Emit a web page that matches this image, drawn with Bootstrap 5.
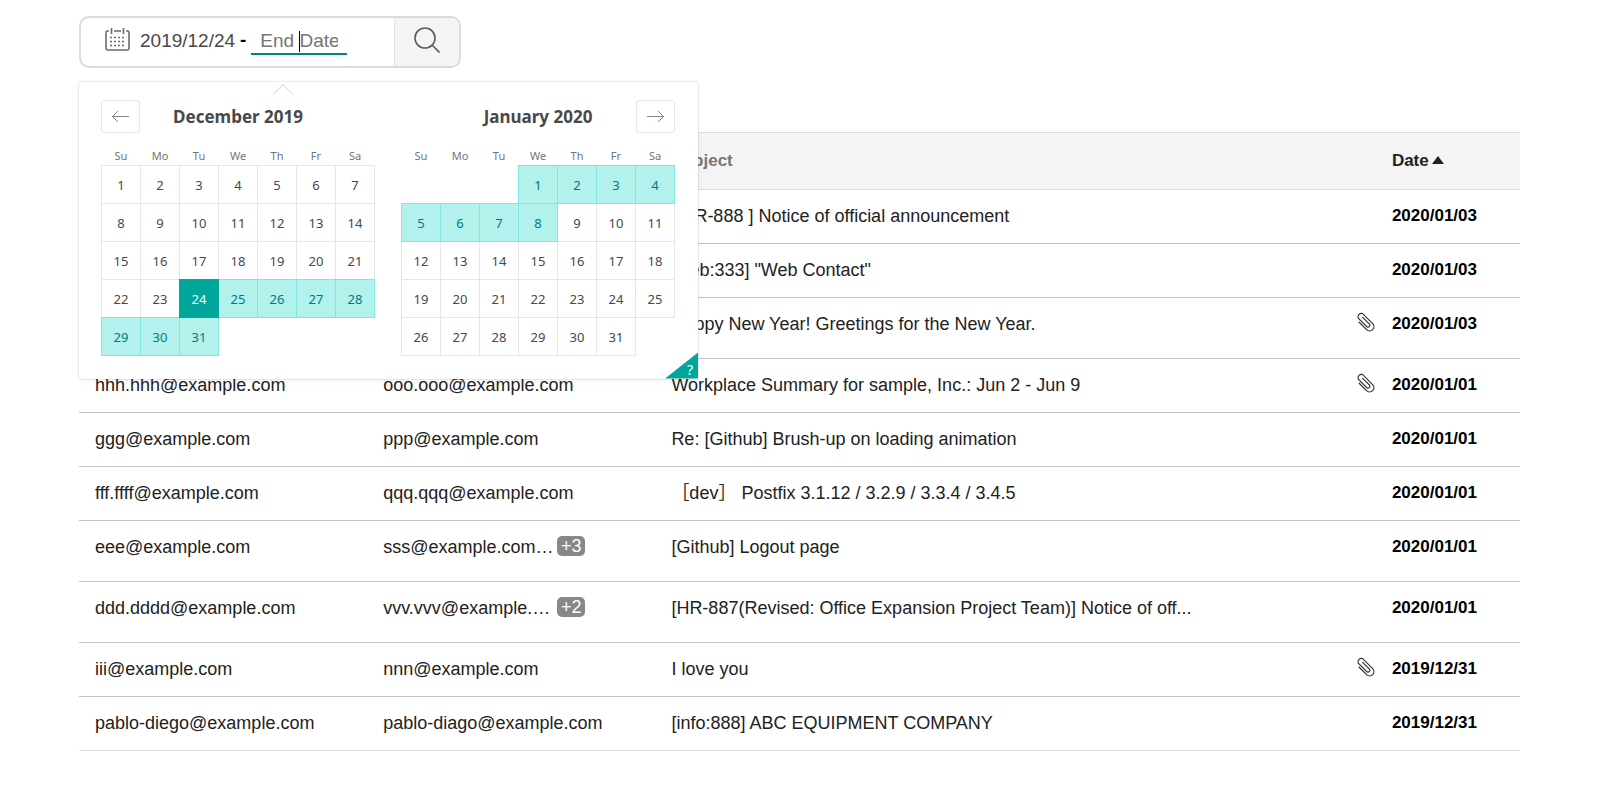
<!DOCTYPE html>
<html lang="en">
<head>
<meta charset="utf-8">
<meta name="viewport" content="width=device-width, initial-scale=1">
<title>Messages</title>
<link href="https://cdn.jsdelivr.net/npm/bootstrap@5.3.0/dist/css/bootstrap.min.css" rel="stylesheet">
<style>
body{font-family:"Liberation Sans","Noto Sans CJK JP",sans-serif;font-size:18px;line-height:27px;color:#222}
.page{max-width:1441px;padding-top:16px}
.search-box{width:382px;height:52px;border:2px solid #dbdbdb;border-radius:10px;overflow:hidden}
.range{font-size:19px;padding:0 0 6px 24px}
.date-input{border:0;border-bottom:2px solid transparent;outline:0;background:none;padding:6px 0 0;color:#484848;height:32px;line-height:24px}
.start-input{width:96px;margin-left:10px}
.end-wrap{margin-left:5px}
.end-input{width:96px;padding:6px 9px 0;border-bottom-color:#008489}
.end-input::placeholder{color:#757575;opacity:1}
.text-caret{left:48px;top:8px;width:1px;height:21px;background:#000}
.search-btn{width:65px;border:0;border-left:1px solid #e4e4e4;background:#f4f4f4;padding:0 0 6px}
.picker{top:82px;left:0;z-index:10;background:#fff;border-radius:3px;box-shadow:0 2px 6px rgba(0,0,0,.05),0 0 0 1px rgba(0,0,0,.07);padding:18px 23px 23px 22px;font-family:"Noto Sans",sans-serif;color:#484848}
.picker-tip{left:193px;top:1px}
.months{column-gap:26px}
.month-title{font-size:17px;font-weight:700;line-height:33px;margin:0}
.nav-btn{width:39px;height:33px;top:0;border:1px solid #e4e7e7;border-radius:3px;background:#fff;padding:0}
.nav-btn svg{display:block;margin:0 auto}
.nav-prev{left:0}
.nav-next{right:0}
.days{border-collapse:collapse;table-layout:fixed;width:274px;text-align:center}
.days th{font-size:11px;font-weight:400;color:#757575;height:32px;line-height:16px;padding:0 0 1px;vertical-align:bottom}
.days td{width:39px;height:38px;padding:2px 0 0;font-size:13px;line-height:18px}
.days .day{border:1px solid #e4e7e7}
.days .span-day{background:#b2f1ec;border:1px double #80e8e0;color:#007a87}
.days .start-day{background:#00a699;border:1px double #00a699;color:#fff}
.help{right:0;bottom:0;width:33px;height:26px;border:0;padding:0;background:#00a699;clip-path:polygon(100% 0,100% 100%,0 100%);color:#fff;font-size:14px;line-height:18px}
.help span{right:5px;bottom:0}
.mail{margin-top:64px;table-layout:fixed;width:100%;border-collapse:collapse}
.mail th{height:57px;background:#f4f4f4;border-top:1px solid #ddd;border-bottom:1px solid #ddd;padding:0 16px 2px;font-size:17px;color:#777}
.mail th.sorted{color:#222}
.mail td{height:54px;padding:13px 16px;vertical-align:top;border-bottom:1px solid #c4c4c4;white-space:nowrap}
.mail tr.tall td{height:61px}
.mail tr:last-child td{border-bottom-color:#ddd}
.mail td.when{font-size:17px;font-weight:700;color:#000;padding-top:12px}
.mail td.subject{padding-right:0}
.clip{margin:1px 1px 0 0}
.c-addr{width:20%}.c-subj{width:50%}.c-date{width:10%}
.to-text{width:170px}
.more{background:#888;color:#fff;border-radius:5px;width:28px;height:20px;line-height:20px;text-align:center;margin:2px 0 0 4px}
.sort-mark{border:6px solid transparent;border-top:0;border-bottom:8px solid #222;margin-left:3px}
</style>
</head>
<body>
<main class="page mx-auto position-relative">
  <form class="search-box d-flex" role="search">
    <div class="range d-flex align-items-center flex-grow-1">
      <svg width="25" height="23" viewBox="0 0 25 23" fill="none" stroke="#6c6c6c" stroke-width="1.6" aria-hidden="true"><path d="M4 3H2.500Q1 3 1 4.500V20.500Q1 22 2.500 22H22.500Q24 22 24 20.500V4.500Q24 3 22.500 3H21M9 3H16"/><path d="M6.500 0V6M18.500 0V6"/><path stroke-dasharray="2 2" d="M5 9.500H21M5 13.500H21M5 17.500H21"/></svg>
      <input class="date-input start-input" type="text" value="2019/12/24" aria-label="Start Date">
      <span class="text-black fw-bold ms-1">-</span>
      <div class="end-wrap position-relative d-flex">
        <input class="date-input end-input" type="text" placeholder="End Date" aria-label="End Date">
        <span class="text-caret position-absolute"></span>
      </div>
    </div>
    <button class="search-btn" type="button" aria-label="Search"><svg width="26" height="26" viewBox="0 0 26 26" fill="none" stroke="#5a5a5a" stroke-width="1.6"><circle cx="11" cy="11" r="10"/><path d="M18 18L25.500 25.500"/></svg></button>
  </form>

  <section class="picker position-absolute" aria-label="Choose dates">
    <svg class="picker-tip position-absolute" width="22" height="12" viewBox="0 0 22 12" fill="#fff" stroke="#cfcfcf" aria-hidden="true"><path d="M1 11.500L11 1.500L21 11.500"/></svg>
    <div class="position-relative">
      <button class="nav-btn nav-prev position-absolute" type="button" aria-label="Previous month"><svg width="19" height="19" viewBox="0 0 19 19" fill="none" stroke="#82888a"><path d="M18 9.500H1.500M7 4L1.500 9.500L7 15"/></svg></button>
      <button class="nav-btn nav-next position-absolute" type="button" aria-label="Next month"><svg width="19" height="19" viewBox="0 0 19 19" fill="none" stroke="#82888a"><path d="M1 9.500H17.500M12 4L17.500 9.500L12 15"/></svg></button>
      <div class="months d-flex">
        <div><h2 class="month-title text-center">December 2019</h2>
          <table class="days" data-offset="0" data-from="24" data-to="31" data-start="24"></table></div>
        <div><h2 class="month-title text-center">January 2020</h2>
          <table class="days" data-offset="3" data-from="1" data-to="8"></table></div>
      </div>
    </div>
    <button class="help position-absolute" type="button" aria-label="Keyboard shortcuts"><span class="position-absolute">?</span></button>
  </section>

  <table class="mail">
    <colgroup><col class="c-addr"><col class="c-addr"><col class="c-subj"><col class="c-date"></colgroup>
    <thead><tr><th></th><th></th><th>Subject</th><th class="sorted"><span class="d-flex align-items-center">Date<span class="sort-mark"></span></span></th></tr></thead>
    <tbody>
      <tr><td></td><td></td><td class="subject">[ HR-888 ] Notice of official announcement</td><td class="when">2020/01/03</td></tr>
      <tr><td></td><td></td><td class="subject">[web:333] "Web Contact"</td><td class="when">2020/01/03</td></tr>
      <tr class="tall"><td></td><td></td><td class="subject"><div class="d-flex justify-content-between">Happy New Year! Greetings for the New Year.<svg class="clip" width="20" height="20" viewBox="0 0 20 20"><use href="#clip"/></svg></div></td><td class="when">2020/01/03</td></tr>
      <tr><td>hhh.hhh@example.com</td><td>ooo.ooo@example.com</td><td class="subject"><div class="d-flex justify-content-between">Workplace Summary for sample, Inc.: Jun 2 - Jun 9<svg class="clip" width="20" height="20" viewBox="0 0 20 20"><use href="#clip"/></svg></div></td><td class="when">2020/01/01</td></tr>
      <tr><td>ggg@example.com</td><td>ppp@example.com</td><td class="subject">Re: [Github] Brush-up on loading animation</td><td class="when">2020/01/01</td></tr>
      <tr><td>fff.ffff@example.com</td><td>qqq.qqq@example.com</td><td class="subject">［dev］ Postfix 3.1.12 / 3.2.9 / 3.3.4 / 3.4.5</td><td class="when">2020/01/01</td></tr>
      <tr class="tall"><td>eee@example.com</td><td><div class="d-flex align-items-start"><span class="to-text">sss@example.com…</span><span class="more">+3</span></div></td><td class="subject">[Github] Logout page</td><td class="when">2020/01/01</td></tr>
      <tr class="tall"><td>ddd.dddd@example.com</td><td><div class="d-flex align-items-start"><span class="to-text">vvv.vvv@example.…</span><span class="more">+2</span></div></td><td class="subject">[HR-887(Revised: Office Expansion Project Team)] Notice of off...</td><td class="when">2020/01/01</td></tr>
      <tr><td>iii@example.com</td><td>nnn@example.com</td><td class="subject"><div class="d-flex justify-content-between">I love you<svg class="clip" width="20" height="20" viewBox="0 0 20 20"><use href="#clip"/></svg></div></td><td class="when">2019/12/31</td></tr>
      <tr><td>pablo-diego@example.com</td><td>pablo-diago@example.com</td><td class="subject">[info:888] ABC EQUIPMENT COMPANY</td><td class="when">2019/12/31</td></tr>
    </tbody>
  </table>
</main>
<svg width="0" height="0" class="position-absolute" aria-hidden="true"><defs><g id="clip" fill="none" stroke="#333" stroke-width="1.2" stroke-linecap="round"><path transform="translate(10 10) rotate(45)" d="M-4 4.300H6.500A4.300 4.300 0 0 0 6.500 -4.300H-7.500A3.400 3.400 0 0 0 -7.500 2H5A1.900 1.900 0 0 0 5 -1.600H-5"/></g></defs></svg>
<script>
// Fill each month grid: five weeks, with the selected span marked
document.querySelectorAll('.days').forEach(t => {
  const d = t.dataset;
  let html = '<thead><tr>' + ['Su','Mo','Tu','We','Th','Fr','Sa'].map(w => `<th>${w}</th>`).join('') + '</tr></thead><tbody>';
  for (let r = 0; r < 5; r++) {
    html += '<tr>';
    for (let c = 0; c < 7; c++) {
      const n = r * 7 + c + 1 - d.offset;
      if (n < 1 || n > 31) { html += '<td></td>'; continue; }
      const cls = n == d.start ? 'start-day' : n >= +d.from && n <= +d.to ? 'span-day' : 'day';
      html += `<td class="${cls}">${n}</td>`;
    }
    html += '</tr>';
  }
  t.innerHTML = html + '</tbody>';
});
</script>
<script src="https://cdn.jsdelivr.net/npm/bootstrap@5.3.0/dist/js/bootstrap.bundle.min.js"></script>
</body>
</html>
